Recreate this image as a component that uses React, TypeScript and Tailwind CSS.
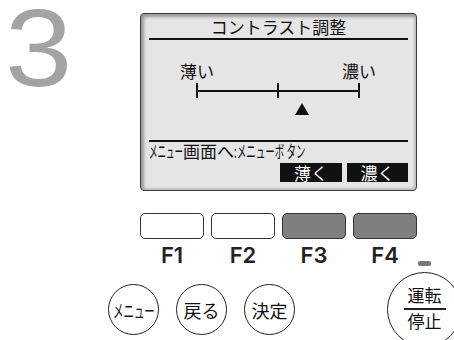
const jp = { fontFamily: '"Noto Sans CJK JP", "Noto Sans", sans-serif' };

// narrow (half-width looking) katakana, squeezed horizontally
const Narrow = ({ text, w, s }: { text: string; w: number; s: string }) => (
  <span className="inline-block whitespace-nowrap" style={{ width: w }}>
    <span className={`inline-block origin-left ${s}`}>{text}</span>
  </span>
);

const FKey = ({ dark }: { dark?: boolean }) => (
  <div
    className={`h-[26px] w-[64px] rounded-[5px] border-[1.5px] border-[#333] ${
      dark ? "bg-[#7f7f7f]" : "bg-white"
    }`}
  />
);

const RoundKey = ({ children }: { children: React.ReactNode }) => (
  <div
    className="flex size-[51px] items-center justify-center rounded-full border-[1.5px] border-[#222] text-[18px] leading-none text-[#111]"
    style={jp}
  >
    {children}
  </div>
);

export default function App() {
  return (
    <div className="relative flex h-[340px] w-[454px] flex-col overflow-hidden bg-white">
      <div className="flex">
        <div
          className="w-[140px] pl-[5px] text-[110px] leading-[96px] text-[#a3a3a3]"
          style={{ fontFamily: '"Liberation Sans", sans-serif' }}
        >
          <span className="inline-block origin-left scale-x-[1.1]">3</span>
        </div>

        <div className="flex flex-col pt-[13px]">
          {/* LCD screen */}
          <div
            className="flex h-[178px] w-[277px] flex-col rounded-[4px] border border-[#3c3c3c] bg-[#e5e5e5] px-[8px] text-[#111] shadow-[inset_3px_3px_3px_#9a9a9a,inset_-2px_-2px_2px_#bdbdbd]"
            style={jp}
          >
            <div className="pt-[3px] text-center text-[17px] leading-[20px]">
              コントラスト調整
            </div>
            <div className="mt-[1px] h-[2px] bg-[#111]" />

            <div className="relative mt-[22px] h-[78px]">
              <span className="absolute left-[31px] top-0 text-[17px] leading-[18px]">
                薄い
              </span>
              <span className="absolute left-[193px] top-0 text-[17px] leading-[18px]">
                濃い
              </span>
              <div className="absolute left-[47px] top-[21px] flex h-[15px] w-[164px] items-center">
                <div className="h-[15px] w-[2px] bg-[#111]" />
                <div className="h-[2px] flex-1 bg-[#111]" />
                <div className="h-[15px] w-[2px] bg-[#111]" />
                <div className="h-[2px] flex-1 bg-[#111]" />
                <div className="h-[15px] w-[2px] bg-[#111]" />
              </div>
              <div className="absolute left-[146px] top-[41px] h-0 w-0 border-x-[7px] border-b-[12px] border-x-transparent border-b-[#111]" />
            </div>

            <div className="h-[2px] bg-[#111]" />
            <div className="flex text-[17px] leading-[18px]">
              <Narrow text="メニュー" w={34} s="scale-x-[0.5]" />
              <span>画面へ</span>
              <Narrow text=":メニューボ タン" w={74} s="scale-x-[0.56]" />
            </div>
            <div className="mt-[3px] flex justify-end gap-[5px]">
              <div className="flex h-[19px] w-[62px] items-center justify-center bg-[#111] text-[17px] leading-none text-white">
                薄く
              </div>
              <div className="flex h-[19px] w-[61px] items-center justify-center bg-[#111] text-[17px] leading-none text-white">
                濃く
              </div>
            </div>
          </div>

          {/* function keys */}
          <div className="mt-[22px] flex gap-[7px]">
            <FKey />
            <FKey />
            <FKey dark />
            <FKey dark />
          </div>
          <div
            className="mt-[4px] flex gap-[7px] text-[22px] font-semibold leading-[24px] text-[#222]"
            style={{ fontFamily: 'Inter, "Liberation Sans", sans-serif' }}
          >
            {["F1", "F2", "F3", "F4"].map((f) => (
              <div key={f} className="w-[64px] text-center">
                {f}
              </div>
            ))}
          </div>
        </div>
      </div>

      <div className="relative mt-[5px] flex items-start pl-[108px]">
        <div className="mt-[12px] flex gap-[17px]">
          <RoundKey>
            <span className="inline-block w-[42px] whitespace-nowrap">
              <span className="inline-block origin-left scale-x-[0.58]">メニュー</span>
            </span>
          </RoundKey>
          <RoundKey>戻る</RoundKey>
          <RoundKey>決定</RoundKey>
        </div>
        <div className="absolute left-[418px] top-[-11px] h-[5px] w-[13px] rounded-[2px] bg-[#777]" />
        <div
          className="ml-[92px] flex size-[75px] shrink-0 flex-col items-center rounded-full border-[1.5px] border-[#222] pt-[13px] text-[17px] leading-[18px] text-[#111]"
          style={jp}
        >
          <span>運転</span>
          <div className="mb-[2px] mt-[4px] h-[1.5px] w-[42px] bg-[#222]" />
          <span>停止</span>
        </div>
      </div>
    </div>
  );
}
